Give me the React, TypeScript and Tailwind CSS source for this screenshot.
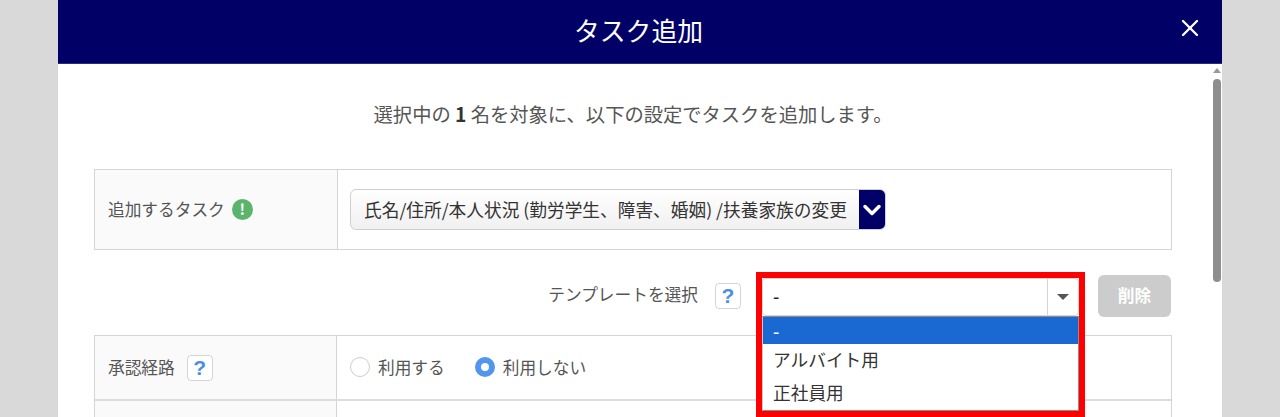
import { ChevronDown, X } from "lucide-react";

const font = { fontFamily: '"Noto Sans CJK JP", "Noto Sans", sans-serif' };

const HelpIcon = () => (
  <span className="flex h-[26px] w-[26px] items-center justify-center rounded-[4px] border border-[#d5d5d5] bg-white font-['Liberation_Sans',sans-serif] text-[21px] font-bold text-[#4a90e2]">
    ?
  </span>
);

const Radio = ({ checked, label }: { checked?: boolean; label: string }) => (
  <label className="flex items-center gap-2">
    {checked ? (
      <span className="h-5 w-5 rounded-full border-[6px] border-[#5295ec] bg-white"></span>
    ) : (
      <span className="h-5 w-5 rounded-full border border-[#cccccc] bg-white"></span>
    )}
    <span>{label}</span>
  </label>
);

export default function App() {
  return (
    <div
      className="flex h-[417px] justify-center overflow-hidden bg-[#d9d9d9] text-[16.7px] text-[#555555]"
      style={font}
    >
      <div className="flex h-[417px] w-[1164px] flex-col bg-white">
        {/* Header */}
        <div className="relative flex h-[64px] shrink-0 items-center justify-center border-b border-[#2a2a80] bg-[#000066] pb-[3px] pr-[3px]">
          <h1 className="text-[25.8px] text-white">タスク追加</h1>
          <X className="absolute right-[18px] top-[14px] h-[28px] w-[28px] text-white" strokeWidth={2} />
        </div>

        <div className="flex min-h-0 flex-1">
          <div className="min-w-0 flex-1 pl-9 pr-[40px]">
            <p className="mt-[37px] h-[27px] text-center text-[19.3px] leading-[27px]">
              選択中の <b className="font-bold text-[#333333]">1</b> 名を対象に、以下の設定でタスクを追加します。
            </p>

            {/* Task */}
            <div className="mt-[41px] flex h-[81px] border border-[#d5d5d5]">
              <div className="flex w-[243px] shrink-0 items-center gap-[7px] border-r border-[#d5d5d5] bg-[#fafafa] pl-[13px]">
                <span>追加するタスク</span>
                <span className="flex h-[21px] w-[21px] items-center justify-center rounded-full bg-[#5cb46b] text-[15px] font-bold text-white">
                  !
                </span>
              </div>
              <div className="flex items-center pl-[12px]">
                <div className="flex h-[41px] items-center overflow-hidden rounded-[6px] border border-[#d0d0d0] bg-gradient-to-b from-white to-[#f0f0f0]">
                  <span className="pl-[13px] pr-[12px] text-[17.7px] text-[#333333]">
                    氏名/住所/本人状況 (勤労学生、障害、婚姻) /扶養家族の変更
                  </span>
                  <span className="flex h-[41px] w-[26px] items-center justify-center bg-[#000066]">
                    <ChevronDown className="h-[28px] w-[28px] shrink-0 text-white" strokeWidth={3} />
                  </span>
                </div>
              </div>
            </div>

            {/* Template */}
            <div className="mt-[25px] flex h-[42px] items-center justify-end pr-[1px]">
              <span className="-mt-[3px]">テンプレートを選択</span>
              <span className="ml-[17px]">
                <HelpIcon />
              </span>
              <div className="relative ml-[21px] mt-[2px] h-[38px] w-[317px] text-[17.7px]">
                <div className="flex h-[38px] items-center rounded-[4px] border border-[#d5d5d5] bg-white pl-[10px] text-[#222222]">
                  <span className="flex-1 pb-[3px] font-medium">-</span>
                  <span className="flex h-full w-[31px] items-center justify-center border-l border-[#d5d5d5]">
                    <span className="h-0 w-0 border-x-[6px] border-t-[6px] border-x-transparent border-t-[#555555]"></span>
                  </span>
                </div>
                {/* Open list */}
                <div className="absolute left-0 top-[38px] z-10 w-[317px] border border-[#8c8c8c] border-l-[#c8c8c8] bg-white text-[#333333]">
                  <div className="flex h-[27px] items-center bg-[#1a69d2] pl-[10px] font-medium text-white">-</div>
                  <div className="flex h-[33px] items-center pb-[3px] pl-[10px]">アルバイト用</div>
                  <div className="flex h-[33px] items-center pb-[2px] pl-[10px]">正社員用</div>
                </div>
                {/* Red highlight */}
                <div className="absolute -inset-x-[6px] -top-[6px] z-20 h-[145px] border-[6px] border-[#ff0000]"></div>
              </div>
              <button className="ml-[19px] h-[42px] w-[73px] rounded-[6px] bg-[#cccccc] text-[16.7px] font-bold text-white">
                削除
              </button>
            </div>

            {/* Approval */}
            <div className="mt-[18px] border-x border-t border-[#d5d5d5]">
              <div className="flex h-[65px] border-b-2 border-[#dddddd]">
                <div className="flex w-[242px] shrink-0 items-center gap-[12px] border-r border-[#d5d5d5] bg-[#fafafa] pl-[13px]">
                  <span>承認経路</span>
                  <HelpIcon />
                </div>
                <div className="flex items-center gap-[30px] pl-[13px]">
                  <Radio label="利用する" />
                  <Radio checked label="利用しない" />
                </div>
              </div>
              <div className="flex h-[40px]">
                <div className="w-[242px] shrink-0 border-r border-[#d5d5d5] bg-[#fafafa]"></div>
              </div>
            </div>
          </div>

          {/* Scrollbar */}
          <div className="mr-[1px] flex w-[9px] shrink-0 flex-col items-center pt-[4px]">
            <span className="h-0 w-0 border-x-[4px] border-b-[5px] border-x-transparent border-b-[#999999]"></span>
            <span className="mt-[6px] h-[203px] w-[8px] rounded-full bg-[#8e8e8e]"></span>
          </div>
        </div>
      </div>
    </div>
  );
}
